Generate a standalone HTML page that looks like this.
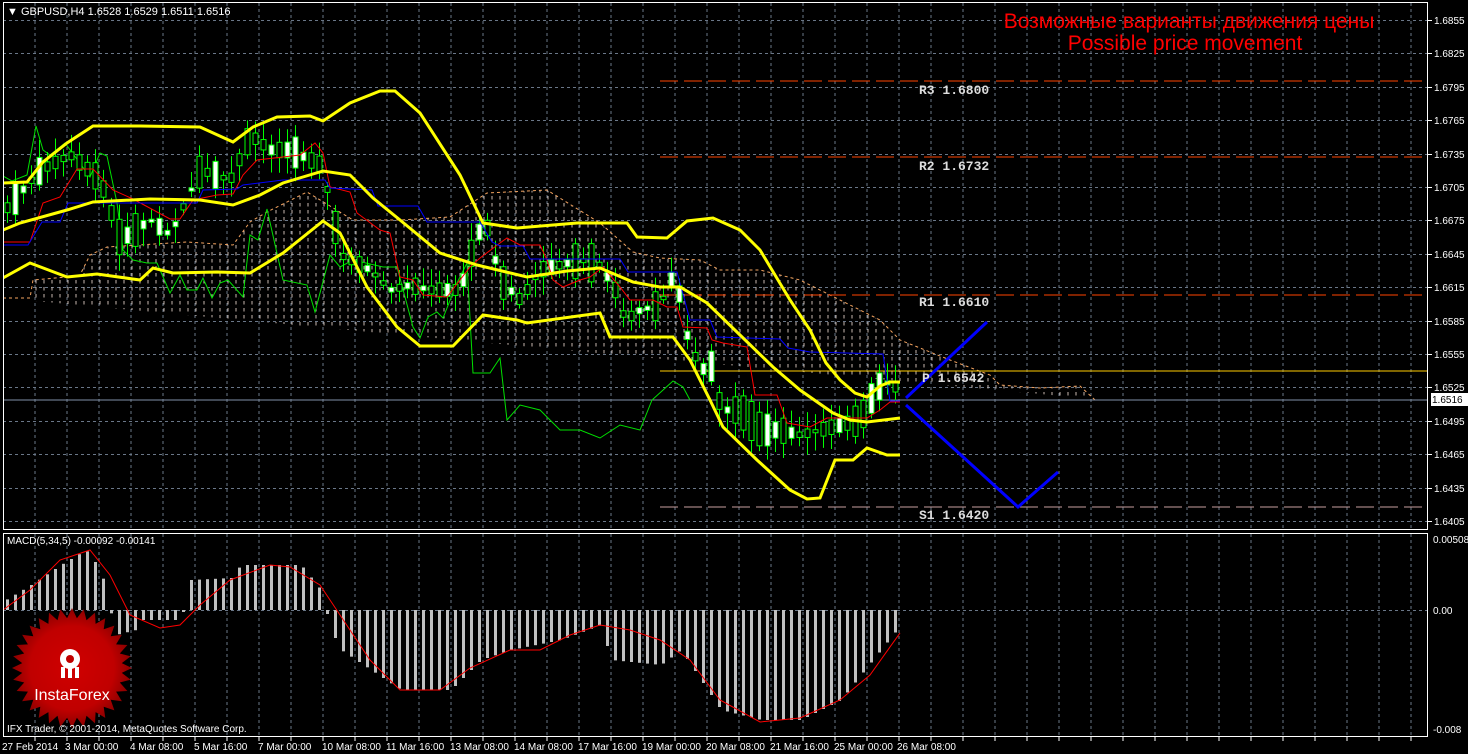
<!DOCTYPE html>
<html><head><meta charset="utf-8"><style>
html,body{margin:0;padding:0;background:#000;}
body{width:1468px;height:754px;overflow:hidden;position:relative;font-family:"Liberation Sans",sans-serif;}
svg{position:absolute;left:0;top:0;}
text{font-family:"Liberation Sans","DejaVu Sans",sans-serif;}
.ax{fill:#fff;font-size:10px;}
.lvl{fill:#ddd;font-family:"Liberation Mono",monospace;font-size:13px;font-weight:bold;}
</style></head><body>
<svg id="s" width="1468" height="754" viewBox="0 0 1468 754" xmlns="http://www.w3.org/2000/svg">
<defs>
<pattern id="hatch" width="8" height="7" patternUnits="userSpaceOnUse">
<line x1="4" y1="0" x2="4" y2="3.5" stroke="#c8b8b0" stroke-width="1"/>
</pattern>
<radialGradient id="rg" cx="50%" cy="50%" r="50%">
<stop offset="0" stop-color="#d00000"/><stop offset="0.7" stop-color="#c00000"/><stop offset="1" stop-color="#8a0000"/>
</radialGradient>
<clipPath id="mainclip"><rect x="3" y="3" width="1425" height="527"/></clipPath>
</defs>
<rect x="0" y="0" width="1468" height="754" fill="#000"/>
<g id="grid"></g>
<g clip-path="url(#mainclip)">
<polygon id="cloud" fill="url(#hatch)" points=""/>
<polyline id="spanA" fill="none" stroke="#f4a460" stroke-width="1" stroke-dasharray="3,3"/>
<polyline id="spanB" fill="none" stroke="#e8c0c0" stroke-width="1" stroke-dasharray="3,3"/>
<line x1="660" y1="81" x2="1428" y2="81" stroke="#ff4500" stroke-dasharray="18,6"/>
<line x1="660" y1="157" x2="1428" y2="157" stroke="#ff4500" stroke-dasharray="18,6"/>
<line x1="660" y1="295" x2="1428" y2="295" stroke="#ff4500" stroke-dasharray="18,6"/>
<line x1="660" y1="371" x2="1428" y2="371" stroke="#ffcc00" stroke-width="1"/>
<line x1="660" y1="507" x2="1428" y2="507" stroke="#c8a0a0" stroke-dasharray="18,6"/>
<line x1="3" y1="400" x2="1428" y2="400" stroke="#8090a8" stroke-width="1"/>
<polyline id="green" fill="none" stroke="#00e000" stroke-width="1"/>
<g id="candles"></g>
<polyline id="red" fill="none" stroke="#ff0000" stroke-width="1"/>
<polyline id="blue" fill="none" stroke="#0000ff" stroke-width="1"/>
<polyline id="bbu" fill="none" stroke="#ffff00" stroke-width="3"/>
<polyline id="bbm" fill="none" stroke="#ffff00" stroke-width="3"/>
<polyline id="bbl" fill="none" stroke="#ffff00" stroke-width="3"/>
<polyline points="906,398 987,322" fill="none" stroke="#0000ff" stroke-width="3"/>
<polyline points="906,405 1018,507 1058,472" fill="none" stroke="#0000ff" stroke-width="3"/>
</g>
<g id="macd"></g>
<polyline id="sig" fill="none" stroke="#ff0000" stroke-width="1"/>
<rect x="3.5" y="2.5" width="1424" height="527" fill="none" stroke="#fff" stroke-width="1"/>
<rect x="3.5" y="533.5" width="1424" height="203" fill="none" stroke="#fff" stroke-width="1"/>
<rect x="1431" y="393" width="37" height="13" fill="#fff"/>
<polygon id="star" fill="url(#rg)"/>
<g transform="translate(70,664)" fill="#fff">
<circle cx="0" cy="-5" r="10"/><circle cx="0" cy="-5" r="4" fill="#c00000"/>
<rect x="-2" y="-1" width="4" height="15"/>
<rect x="-9" y="3" width="4" height="11"/><rect x="5" y="3" width="4" height="11"/>
</g>
<text x="7" y="15" fill="#fff" font-size="11">▼ GBPUSD,H4  1.6528 1.6529 1.6511 1.6516</text>
<text x="1189" y="28" fill="#ff0000" font-size="21" text-anchor="middle">Возможные варианты движения цены</text>
<text x="1185" y="50" fill="#ff0000" font-size="21" text-anchor="middle">Possible price movement</text>
<text class="lvl" x="919" y="94">R3 1.6800</text>
<text class="lvl" x="919" y="170">R2 1.6732</text>
<text class="lvl" x="919" y="306">R1 1.6610</text>
<text class="lvl" x="922" y="382">P 1.6542</text>
<text class="lvl" x="919" y="519">S1 1.6420</text>
<text x="7" y="544" fill="#fff" font-size="10">MACD(5,34,5) -0.00092 -0.00141</text>
<text x="7" y="732" fill="#fff" font-size="10">IFX Trader, © 2001-2014, MetaQuotes Software Corp.</text>
<text x="72" y="700" fill="#fff" font-size="16" text-anchor="middle">InstaForex</text>
<g class="ax">
<text x="1434" y="24">1.6855</text><text x="1434" y="57">1.6825</text><text x="1434" y="91">1.6795</text>
<text x="1434" y="124">1.6765</text><text x="1434" y="158">1.6735</text><text x="1434" y="191">1.6705</text>
<text x="1434" y="224">1.6675</text><text x="1434" y="258">1.6645</text><text x="1434" y="291">1.6615</text>
<text x="1434" y="325">1.6585</text><text x="1434" y="358">1.6555</text><text x="1434" y="391">1.6525</text>
<text x="1432" y="403" fill="#000">1.6516</text>
<text x="1434" y="425">1.6495</text><text x="1434" y="458">1.6465</text><text x="1434" y="492">1.6435</text>
<text x="1434" y="525">1.6405</text>
<text x="1433" y="543">0.00508</text><text x="1433" y="614">0.00</text><text x="1433" y="733">-0.008</text>
<text x="2" y="750">27 Feb 2014</text><text x="65" y="750">3 Mar 00:00</text><text x="130" y="750">4 Mar 08:00</text>
<text x="194" y="750">5 Mar 16:00</text><text x="258" y="750">7 Mar 00:00</text><text x="322" y="750">10 Mar 08:00</text>
<text x="386" y="750">11 Mar 16:00</text><text x="450" y="750">13 Mar 08:00</text><text x="514" y="750">14 Mar 08:00</text>
<text x="578" y="750">17 Mar 16:00</text><text x="642" y="750">19 Mar 00:00</text><text x="706" y="750">20 Mar 08:00</text>
<text x="770" y="750">21 Mar 16:00</text><text x="834" y="750">25 Mar 00:00</text><text x="897" y="750">26 Mar 08:00</text>
</g>
</svg>
<script>
var NS="http://www.w3.org/2000/svg";
function el(p,t,a){var e=document.createElementNS(NS,t);for(var k in a)e.setAttribute(k,a[k]);p.appendChild(e);return e;}
function P(a){var s=[];for(var i=0;i<a.length;i+=2)s.push(a[i]+","+a[i+1]);return s.join(" ");}
function interp(a,x){for(var i=0;i<a.length-2;i+=2){if(x>=a[i]&&x<=a[i+2]){var t=(x-a[i])/((a[i+2]-a[i])||1);return a[i+1]+t*(a[i+3]-a[i+1]);}}return x<a[0]?a[1]:a[a.length-1];}
var g=document.getElementById("grid");
for(var x=35;x<=1411;x+=32){el(g,"line",{x1:x,y1:3,x2:x,y2:530,stroke:"#6a7788","stroke-dasharray":"3,3"});el(g,"line",{x1:x,y1:534,x2:x,y2:737,stroke:"#6a7788","stroke-dasharray":"3,3"});el(g,"line",{x1:x,y1:737,x2:x,y2:741,stroke:"#fff"});}
for(var k=0;k<16;k++){var y=Math.round(20+k*33.4)+0.5;el(g,"line",{x1:3,y1:y,x2:1428,y2:y,stroke:"#6a7788","stroke-dasharray":"3,3"});el(g,"line",{x1:1428,y1:y,x2:1432,y2:y,stroke:"#fff"});}
el(g,"line",{x1:3,y1:610.5,x2:1428,y2:610.5,stroke:"#6a7788","stroke-dasharray":"3,3"});
var top=[3,200,10,210,33,223,50,233,67,243,83,243,90,210,107,190,200,190,213,197,220,210,233,237,250,213,273,190,300,188,340,190,410,193,467,173,487,167,520,162,533,170,540,188,580,197,587,207,630,207,637,227,667,235,700,225,730,225,760,235,800,235,850,235,890,250,910,290,950,298,990,313,1050,318,1090,318,1100,335,1105,360,1105,400];
var bot=[3,298,30,298,33,280,67,277,80,275,90,255,107,247,187,242,233,245,250,222,267,212,307,192,353,220,400,220,450,217,487,193,547,190,600,223,633,252,660,258,700,260,720,270,760,270,800,280,850,305,880,320,900,340,950,360,990,375,1000,385,1040,388,1080,386,1095,400,1105,400];
var poly=P(top);var rb=[];for(var i=bot.length-2;i>=0;i-=2)rb.push(bot[i]+","+bot[i+1]);
document.getElementById("cloud").setAttribute("points",poly+" "+rb.join(" "));
document.getElementById("spanA").setAttribute("points",P(bot));
document.getElementById("spanB").setAttribute("points",P(top));
document.getElementById("bbu").setAttribute("points",P([3,183,27,182,43,162,67,143,93,126,140,126,200,127,233,142,253,127,277,117,310,116,323,121,350,103,380,91,395,91,420,113,460,175,483,223,517,228,577,223,627,223,637,237,667,238,687,221,713,218,740,230,760,250,775,275,790,300,810,330,826,363,840,380,855,393,867,397,880,386,890,382,900,382]));
document.getElementById("bbm").setAttribute("points",P([3,230,20,223,67,210,93,202,150,199,200,200,233,205,260,195,283,183,323,171,350,175,373,198,400,220,440,253,477,265,527,277,567,271,600,268,633,282,660,287,680,287,707,303,740,335,773,367,800,390,833,413,850,420,867,422,900,418]));
document.getElementById("bbl").setAttribute("points",P([3,278,30,263,67,277,97,274,140,280,153,268,173,273,217,272,250,273,283,253,323,221,340,233,367,287,397,327,420,346,453,346,483,315,517,320,527,323,600,313,610,337,673,337,690,360,710,400,723,427,757,460,790,490,807,499,820,498,835,460,853,460,867,448,887,455,900,455]));
document.getElementById("red").setAttribute("points",P([3,242,30,242,43,203,60,197,77,169,93,169,113,190,133,199,170,219,180,219,193,200,217,195,233,194,243,175,257,160,300,155,315,143,323,153,330,187,350,192,357,213,380,230,390,233,400,277,413,280,423,295,447,297,470,267,480,258,500,243,507,238,520,245,540,245,547,260,553,280,563,287,580,280,590,277,603,267,620,287,630,300,653,300,667,307,677,307,683,327,707,328,712,340,723,343,747,347,755,395,777,395,787,423,810,427,827,418,867,418,880,410,890,402,900,402]));
document.getElementById("blue").setAttribute("points",P([3,245,28,245,42,222,60,222,68,203,197,203,203,190,237,189,243,185,283,180,325,180,330,188,372,190,378,206,418,206,427,222,480,222,492,242,500,246,523,246,530,259,620,259,628,272,677,272,690,320,710,320,717,337,780,339,788,348,810,352,883,354,890,401,900,401]));
document.getElementById("green").setAttribute("points",P([3,176,12,181,27,175,36,126,43,150,50,155,65,143,90,177,100,153,107,156,117,203,123,250,133,260,147,263,157,263,170,293,180,275,187,290,197,290,203,278,212,298,220,283,228,280,243,297,250,235,258,240,267,209,283,280,307,285,315,312,330,255,340,267,353,260,383,267,397,267,413,327,420,338,428,317,437,312,443,318,457,283,467,263,473,373,490,373,500,358,507,420,520,405,540,410,560,430,580,430,600,438,620,425,640,430,652,400,673,381,683,387,690,400]));
var mid=[5,210,40,170,70,155,100,180,120,240,150,220,170,235,200,170,230,180,250,135,270,150,290,150,320,165,330,200,340,255,370,270,390,290,410,285,430,290,460,290,475,240,485,220,500,280,520,300,540,270,560,265,580,260,600,265,615,290,625,320,640,310,660,305,675,270,685,330,700,370,715,365,720,410,740,410,760,430,780,430,800,435,820,430,840,425,860,420,870,400,880,385,890,382,900,392];
var cg=document.getElementById("candles");var seed=7;function rnd(){seed=(seed*9301+49297)%233280;return seed/233280;}
for(var x=7,i=0;x<=900;x+=8,i++){var m=interp(mid,x);var h=3+rnd()*14;if(rnd()<0.15)h+=22;var o=m-h*(rnd()<.5?1:-1)/2,c=2*m-o;var hi=Math.min(o,c)-4-rnd()*14,lo=Math.max(o,c)+4+rnd()*14;
el(cg,"line",{x1:x+0.5,y1:hi,x2:x+0.5,y2:lo,stroke:"#00ff00"});
var t=Math.min(o,c),b=Math.max(o,c);if(b-t<2)b=t+2;
el(cg,"rect",{x:x-2,y:t,width:5,height:b-t,fill:(o>c?"#fff":"#000"),stroke:"#00ff00","stroke-width":1});}
var hk=[5,600,30,585,60,565,85,550,100,570,115,635,135,630,140,620,180,620,190,580,230,578,240,565,300,565,320,590,330,630,340,650,400,690,450,690,480,660,510,650,560,640,600,625,610,660,660,665,680,650,700,680,720,710,760,720,800,720,840,700,880,650,900,625];
var mg=document.getElementById("macd");
for(var x=6;x<=900;x+=8){var y=interp(hk,x);var t=Math.min(y,610),b=Math.max(y,610);el(mg,"rect",{x:x,y:t,width:3,height:Math.max(b-t,1),fill:"#c0c0c0"});}
document.getElementById("sig").setAttribute("points",P([3,610,30,590,60,560,90,550,110,575,130,615,160,628,180,625,200,605,230,580,270,565,290,567,320,585,340,615,370,660,400,690,440,690,470,668,510,650,540,650,570,635,600,625,630,630,660,640,690,660,720,700,760,722,800,718,840,700,870,675,900,633]));
var st=[];for(var i=0;i<64;i++){var a=i*Math.PI/32;var r=i%2?50:60;st.push((72+r*Math.cos(a)).toFixed(1)+","+(668+r*Math.sin(a)).toFixed(1));}
document.getElementById("star").setAttribute("points",st.join(" "));
</script>
</body></html>
